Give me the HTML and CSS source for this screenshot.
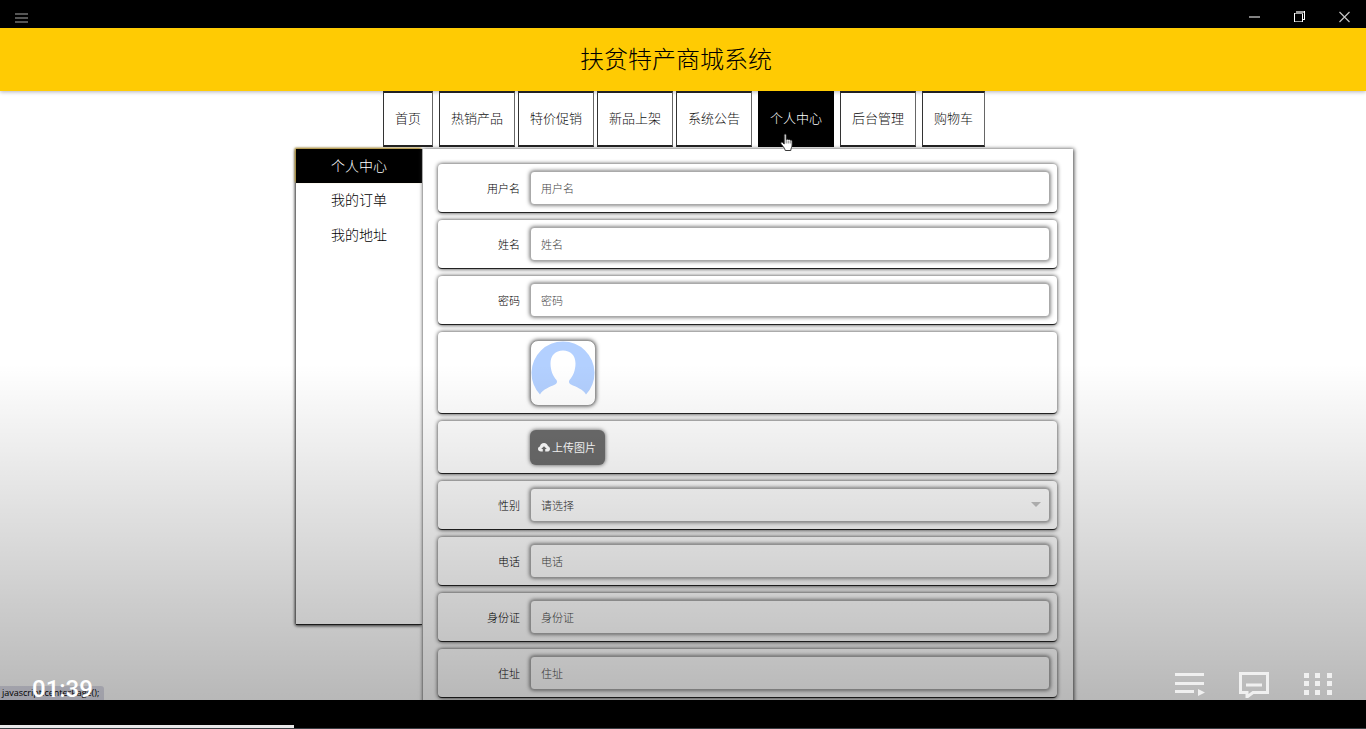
FILE: index.html
```html
<!DOCTYPE html>
<html lang="zh-CN">
<head>
<meta charset="utf-8">
<meta name="viewport" content="width=device-width, initial-scale=1">
<title>扶贫特产商城系统</title>
<link rel="stylesheet" href="styles.css">
</head>
<body>
<div class="titlebar">
  <button class="bar-button menu-button" type="button" aria-label="菜单">
    <svg width="13" height="12" viewBox="0 0 13 12" shape-rendering="crispEdges"><path d="M0 2h13v2H0zM0 6h13v2H0zM0 10h13v2H0z" fill="#555"/></svg>
  </button>
  <div class="window-controls">
    <button class="bar-button" type="button" aria-label="最小化">
      <svg width="12" height="12" viewBox="0 0 12 12" shape-rendering="crispEdges"><path d="M0 5h11v2H0z" fill="#828282"/></svg>
    </button>
    <button class="bar-button" type="button" aria-label="还原">
      <svg width="12" height="12" viewBox="0 0 12 12" shape-rendering="crispEdges"><path d="M2 0h9v2H2zM0 2h9v1H0zM1 10h8v1H1z" fill="#a0a0a0"/><path d="M0 2h1v9H0zM8 3h1v8H8zM10 0h1v9h-1zM9 8h1v1H9z" fill="#fff"/></svg>
    </button>
    <button class="bar-button" type="button" aria-label="关闭">
      <svg width="12" height="12" viewBox="0 0 12 12"><path d="M.5 1l10 10M10.500 1L.5 11" stroke="#c4c4c4" stroke-width="1.2"/></svg>
    </button>
  </div>
</div>

<div class="stage">
  <header class="site-header"><h1 class="site-title">扶贫特产商城系统</h1></header>
  <nav class="main-nav">
    <a class="nav-link wide" href="#">首页</a>
    <a class="nav-link" href="#">热销产品</a>
    <a class="nav-link" href="#">特价促销</a>
    <a class="nav-link" href="#">新品上架</a>
    <a class="nav-link wide" href="#">系统公告</a>
    <a class="nav-link wide active" href="#">个人中心<svg class="pointer" width="14" height="19" viewBox="0 0 14 19"><path d="M4.200 11V2.200c0-1.600 2-1.600 2 0V6.800c.3-1 1.900-.9 2 .2.400-.9 1.900-.7 2 .4.500-.7 1.800-.4 1.900.7V12c0 2.200-1.300 3-1.300 5.500H5.300C5 15 1.500 12 .9 10.400c-.4-1.200 1-1.600 1.800-.8z" fill="#fff" stroke="#222" stroke-width=".9"/><path d="M6.200 7v3.500M8.200 7.500v3M10.200 8v2.500" stroke="#444" stroke-width=".7"/></svg></a>
    <a class="nav-link wide" href="#">后台管理</a>
    <a class="nav-link" href="#">购物车</a>
  </nav>

  <div class="layout">
    <aside class="sidebar">
      <a class="side-link active" href="#">个人中心</a>
      <a class="side-link" href="#">我的订单</a>
      <a class="side-link" href="#">我的地址</a>
    </aside>
    <main class="panel">
      <form class="profile-form">
        <div class="row"><label class="label" for="user">用户名</label><input class="field" id="user" type="text" placeholder="用户名"></div>
        <div class="row"><label class="label" for="name">姓名</label><input class="field" id="name" type="text" placeholder="姓名"></div>
        <div class="row"><label class="label" for="pass">密码</label><input class="field" id="pass" type="password" placeholder="密码"></div>
        <div class="row avatar-row">
          <svg class="avatar" viewBox="0 0 64 64" role="img" aria-label="头像"><path d="M9 53.500A31.500 31.500 0 1 1 55 53.500C52 48 45 46 40 43.500c-2-1-2.500-2.500-1.500-4.500C42 35.500 44.500 29 44.500 22.500 44.500 14.500 39.500 9.500 32 9.500S19.500 14.500 19.500 22.500C19.500 29 22 35.500 25.500 39c1 2 .5 3.500-1.500 4.500C19 46 12 48 9 53.500z" fill="#b3d0ff"/></svg>
        </div>
        <div class="row upload-row">
          <button class="upload" type="button"><svg width="12" height="9" viewBox="0 0 12 9"><path d="M3 8.500C1.200 8.500 0 7.500 0 6c0-1.300.9-2.200 2-2.500C2.200 1.500 3.800 0 6 0c2.100 0 3.600 1.300 4 3.300 1.200.3 2 1.300 2 2.600 0 1.600-1.200 2.600-3 2.600H7.200V6h1.600L6 3.200 3.200 6h1.600v2.500z" fill="#fff"/></svg>上传图片</button>
        </div>
        <div class="row"><label class="label" for="sex">性别</label>
          <div class="select-box">
            <select class="field" id="sex"><option>请选择</option><option>男</option><option>女</option></select>
            <svg class="caret" width="10" height="5" viewBox="0 0 10 5"><path d="M0 0h10L5 5z" fill="#c2c2c2"/></svg>
          </div>
        </div>
        <div class="row"><label class="label" for="tel">电话</label><input class="field" id="tel" type="text" placeholder="电话"></div>
        <div class="row"><label class="label" for="idcard">身份证</label><input class="field" id="idcard" type="text" placeholder="身份证"></div>
        <div class="row"><label class="label" for="addr">住址</label><input class="field" id="addr" type="text" placeholder="住址"></div>
      </form>
    </main>
  </div>

  <div class="link-status">javascript:centerPage();</div>
  <div class="shade"></div>
  <div class="player">
    <span class="time">01:39</span>
    <div class="player-actions">
      <button class="bar-button" type="button" aria-label="播放列表">
        <svg width="32" height="26" viewBox="0 0 32 26" fill="#f0f0f0"><path d="M1 1h29v3H1zM1 10h29v3H1zM1 18h19v3H1zM24 17l7 3.500-7 3.500z"/></svg>
      </button>
      <button class="bar-button" type="button" aria-label="字幕">
        <svg width="32" height="26" viewBox="0 0 32 26"><path d="M2.500 1.500h27v19H15L9 25v-4.500H2.500z" fill="none" stroke="#f0f0f0" stroke-width="3"/><path d="M8 11.500h16v3H8z" fill="#f0f0f0"/></svg>
      </button>
      <button class="bar-button" type="button" aria-label="更多">
        <svg width="32" height="26" viewBox="0 0 32 26" fill="#f0f0f0"><path d="M2 1h5v5H2zM13 1h5v5h-5zM25 1h5v5h-5zM2 9h5v5H2zM13 9h5v5h-5zM25 9h5v5h-5zM2 18h5v5H2zM13 18h5v5h-5zM25 18h5v5h-5z"/></svg>
      </button>
    </div>
  </div>
</div>

<div class="footer"><div class="track"><div class="played"></div></div></div>
</body>
</html>
```
FILE: styles.css
```css
* { box-sizing: border-box; }

body {
  margin: 0;
  height: 100vh;
  display: flex;
  flex-direction: column;
  overflow: hidden;
  background: #000;
  font-family: "Noto Sans CJK SC", sans-serif;
  font-weight: 300;
  color: #000;
}

a { color: inherit; text-decoration: none; }

.bar-button {
  display: flex;
  padding: 0;
  border: 0;
  background: none;
}

.titlebar {
  flex: none;
  height: 28px;
  padding: 6px 15px 0;
  display: flex;
  justify-content: space-between;
  align-items: center;
}

.window-controls { display: flex; gap: 33px; }

.stage {
  flex: 1;
  min-height: 0;
  position: relative;
  overflow: hidden;
  background: #fff;
}

.site-header {
  height: 63px;
  padding: 0 14px 3px 0;
  display: flex;
  align-items: center;
  justify-content: center;
  background: #ffcb03;
  box-shadow: 0 1px 4px rgba(0, 0, 30, .3);
}

.site-title {
  margin: 0;
  font-size: 24px;
  font-weight: 300;
  line-height: 36px;
  color: #000;
}

.main-nav {
  padding-left: 2px;
  display: flex;
  justify-content: center;
  gap: 3px;
  position: relative;
}

.nav-link {
  height: 56px;
  padding: 0 11px;
  border: 1px solid #444;
  border-width: 2px 1px;
  border-color: #222 #666 #222 #333;
  background: #fff;
  font-size: 13px;
  line-height: 50px;
  color: #111;
}

.nav-link.wide { margin-right: 3px; }

.nav-link.active {
  position: relative;
  background: #000;
  border-color: #000;
  color: #fff;
}

.pointer { position: absolute; left: 21px; top: 40px; }

.layout {
  width: 57.1%;
  margin: 2px auto 0;
  padding-left: 3px;
  display: flex;
  align-items: flex-start;
}

.sidebar {
  flex: none;
  width: 126px;
  height: 476px;
  border-bottom: 1px solid #222;
  box-shadow: -1px 0 3px #444, 0 1px 3px #777;
}

.side-link {
  display: block;
  height: 35px;
  font-size: 14px;
  line-height: 32px;
  text-align: center;
}

.side-link.active {
  height: 34px;
  background: #000;
  color: #fff;
  box-shadow: -1px -1px 2px #bd9a31;
}

.panel {
  flex: 1;
  padding: 15px 16px 30px 15px;
  background: #fff;
  border-left: 1px solid #aaa;
  box-shadow: 1px 0 4px #444;
}

.profile-form { display: flex; flex-direction: column; gap: 7px; }

.row {
  height: 49px;
  padding: 0 7px 0 0;
  display: flex;
  align-items: center;
  border-bottom: 1px solid #222;
  border-radius: 4px;
  background: #fff;
  box-shadow: 0 0 4px #333;
}

.avatar-row { height: 82px; padding-left: 92px; }
.upload-row { height: 53px; padding-left: 92px; }

.label {
  flex: none;
  width: 92px;
  padding-right: 10px;
  text-align: right;
  font-size: 11px;
}

.field {
  flex: 1;
  min-width: 0;
  width: 100%;
  height: 34px;
  padding: 0 10px;
  border: 1px solid #aaa;
  border-radius: 4px;
  background: #fff;
  box-shadow: 0 0 4px #555;
  font: inherit;
  font-size: 11px;
  color: #333;
  appearance: none;
}

.field::placeholder { color: #444; opacity: 1; }

.select-box { flex: 1; position: relative; display: flex; }
.caret { position: absolute; right: 9px; top: 14px; }

.avatar {
  width: 66px;
  height: 66px;
  border: 1px solid #999;
  border-radius: 8px;
  background: #fff;
  box-shadow: 0 0 4px #444;
}

.upload {
  height: 35px;
  padding: 0 9px 0 8px;
  display: flex;
  align-items: center;
  gap: 2px;
  border: 0;
  border-radius: 6px;
  background: #6c6c6c;
  box-shadow: 0 0 4px #555;
  font: inherit;
  font-size: 11px;
  font-weight: 400;
  color: #fff;
}

.link-status {
  position: absolute;
  left: 0;
  bottom: 0;
  padding: 0 5px 0 2px;
  border-radius: 0 3px 0 0;
  background: #dcdce8;
  font-family: "Open Sans", sans-serif;
  font-size: 9px;
  font-weight: 400;
  line-height: 14px;
  white-space: nowrap;
}

.shade {
  position: absolute;
  inset: 50% 0 0;
  background: linear-gradient(rgba(0, 0, 0, 0), rgba(0, 0, 0, .28));
  pointer-events: none;
}

.player {
  position: absolute;
  left: 0;
  right: 0;
  bottom: 0;
  padding: 0 32px 0 32px;
  display: flex;
  justify-content: space-between;
  align-items: flex-end;
}

.time {
  font-family: Roboto, sans-serif;
  font-size: 24px;
  font-weight: 500;
  line-height: 22px;
  color: #fff;
}

.player-actions { display: flex; gap: 32px; padding-bottom: 2px; }

.footer {
  flex: none;
  height: 29px;
  display: flex;
  align-items: flex-end;
}

.track { width: 100%; border-bottom: 1px solid #3a3f44; }
.played { width: 294px; height: 3px; background: #e8e8e8; }
```
